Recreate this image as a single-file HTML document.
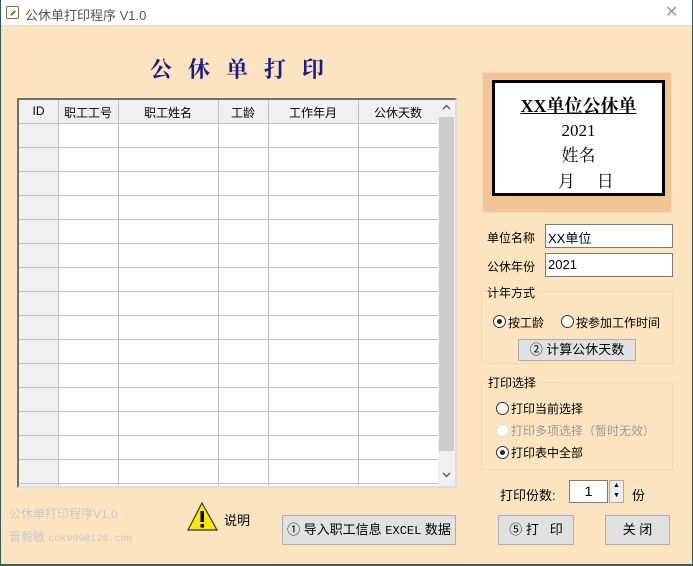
<!DOCTYPE html>
<html><head><meta charset="utf-8"><style>
*{margin:0;padding:0;box-sizing:border-box}
body{width:693px;height:566px;overflow:hidden;background:#fde4c0;font-family:"Liberation Sans","Noto Sans CJK SC",sans-serif;font-size:12px;color:#000;position:relative}
.a{position:absolute}
.t{white-space:nowrap}
.btn{position:absolute;background:#e1e1e1;border:1px solid #adadad;text-align:center;font-size:13px}
.radio{position:absolute;width:13px;height:13px;border:1px solid #333;border-radius:50%;background:#fff}
.radio.on::after{content:"";position:absolute;left:3px;top:3px;width:5px;height:5px;border-radius:50%;background:#222}
</style></head><body>
<div class="a" style="left:0;top:0;width:693px;height:26px;background:#fff;border-bottom:1px solid #f0e0c8"></div>
<div class="a" style="left:6px;top:6px;width:13px;height:13px;border:1px solid #8a6a3a;border-radius:2px;background:#fff"><div style="position:absolute;left:3px;top:5px;width:6px;height:2px;background:#3a9a3a;transform:rotate(-45deg)"></div></div>
<div class="a t" style="left:25px;top:5px;font-size:13px;color:#555">公休单打印程序 V1.0</div>
<div class="a t" style="left:665px;top:2px;font-size:16px;color:#999;font-weight:300">✕</div>
<div class="a" style="left:0;top:0;width:1px;height:566px;background:#2f5a5a"></div>
<div class="a" style="left:692px;top:0;width:1px;height:566px;background:#2f5a5a"></div>
<div class="a" style="left:0;top:564px;width:693px;height:2px;background:#3d5f5a"></div>

<div class="a t" style="left:150px;top:53px;font-size:22px;font-weight:bold;color:#1a1a8a;letter-spacing:16px;font-family:'Noto Serif CJK SC',serif">公休单打印</div>

<!-- grid -->
<div class="a" style="left:17px;top:98px;width:440px;height:390px;border:2px solid #6e6e6e;border-right-color:#ddd;border-bottom-color:#ddd;background:#fff;overflow:hidden">
<svg width="436" height="386" style="position:absolute;left:0;top:0">
<rect x="0" y="0" width="419" height="23" fill="#f0f0f0"/>
<rect x="0" y="0" width="39" height="386" fill="#f0f0f0"/>
<g stroke="#c0c0c0" stroke-width="1">
<line x1="39.5" y1="0" x2="39.5" y2="386"/><line x1="99.5" y1="0" x2="99.5" y2="386"/><line x1="199.5" y1="0" x2="199.5" y2="386"/><line x1="249.5" y1="0" x2="249.5" y2="386"/><line x1="339.5" y1="0" x2="339.5" y2="386"/>
<line x1="0" y1="23.5" x2="419" y2="23.5"/><line x1="0" y1="47.5" x2="419" y2="47.5"/><line x1="0" y1="71.5" x2="419" y2="71.5"/><line x1="0" y1="95.5" x2="419" y2="95.5"/><line x1="0" y1="119.5" x2="419" y2="119.5"/><line x1="0" y1="143.5" x2="419" y2="143.5"/><line x1="0" y1="167.5" x2="419" y2="167.5"/><line x1="0" y1="191.5" x2="419" y2="191.5"/><line x1="0" y1="215.5" x2="419" y2="215.5"/><line x1="0" y1="239.5" x2="419" y2="239.5"/><line x1="0" y1="263.5" x2="419" y2="263.5"/><line x1="0" y1="287.5" x2="419" y2="287.5"/><line x1="0" y1="311.5" x2="419" y2="311.5"/><line x1="0" y1="335.5" x2="419" y2="335.5"/><line x1="0" y1="359.5" x2="419" y2="359.5"/><line x1="0" y1="383.5" x2="419" y2="383.5"/>
</g>
<rect x="419" y="0" width="17" height="386" fill="#f0f0f0"/>
<rect x="420" y="17" width="15" height="334" fill="#cdcdcd"/>
<path d="M424 9 L427.5 5.5 L431 9" fill="none" stroke="#555" stroke-width="1.3"/>
<path d="M424 373 L427.5 376.5 L431 373" fill="none" stroke="#555" stroke-width="1.3"/>
</svg>
<div class="a t" style="left:0;top:4px;width:39px;text-align:center">ID</div>
<div class="a t" style="left:39px;top:4px;width:60px;text-align:center">职工工号</div>
<div class="a t" style="left:99px;top:4px;width:100px;text-align:center">职工姓名</div>
<div class="a t" style="left:199px;top:4px;width:50px;text-align:center">工龄</div>
<div class="a t" style="left:249px;top:4px;width:90px;text-align:center">工作年月</div>
<div class="a t" style="left:339px;top:4px;width:80px;text-align:center">公休天数</div>
</div>

<!-- preview -->
<div class="a" style="left:482px;top:72px;width:190px;height:141px;background:#f3c495;border:1px solid #f8d8b8"></div>
<div class="a" style="left:492px;top:80px;width:173px;height:116px;background:#fff;border:3px solid #000"></div>
<div class="a t" style="left:492px;top:92px;width:173px;text-align:center;font-family:'Liberation Serif','Noto Serif CJK SC',serif;font-size:18px;font-weight:bold;text-decoration:underline">XX单位公休单</div>
<div class="a t" style="left:492px;top:121px;width:173px;text-align:center;font-family:'Liberation Serif','Noto Serif CJK SC',serif;font-size:17px">2021</div>
<div class="a t" style="left:492px;top:141px;width:173px;text-align:center;font-family:'Noto Serif CJK SC',serif;font-size:17px">姓名</div>
<div class="a t" style="left:558px;top:167px;font-family:'Noto Serif CJK SC',serif;font-size:17px">月&nbsp;&nbsp;&nbsp;&nbsp;&nbsp;日</div>

<div class="a t" style="left:487px;top:229px">单位名称</div>
<div class="a" style="left:545px;top:224px;width:128px;height:24px;background:#fff;border:1px solid #7a7a7a"></div>
<div class="a t" style="left:548px;top:228px;font-size:13px">XX单位</div>
<div class="a t" style="left:487px;top:258px">公休年份</div>
<div class="a" style="left:545px;top:253px;width:128px;height:24px;background:#fff;border:1px solid #7a7a7a"></div>
<div class="a t" style="left:548px;top:257px;font-size:13px">2021</div>

<div class="a" style="left:481px;top:291px;width:192px;height:73px;border:1px solid #f0d8b8"></div>
<div class="a t" style="left:487px;top:284px;background:#fde4c0;padding-right:3px">计年方式</div>
<div class="radio on" style="left:493px;top:315px"></div>
<div class="a t" style="left:508px;top:314px">按工龄</div>
<div class="radio" style="left:561px;top:315px"></div>
<div class="a t" style="left:576px;top:314px">按参加工作时间</div>
<div class="btn" style="left:518px;top:339px;width:118px;height:22px;line-height:20px">② 计算公休天数</div>

<div class="a" style="left:481px;top:382px;width:192px;height:88px;border:1px solid #f0d8b8"></div>
<div class="a t" style="left:488px;top:374px;background:#fde4c0;padding-right:3px">打印选择</div>
<div class="radio" style="left:496px;top:402px"></div>
<div class="a t" style="left:511px;top:400px">打印当前选择</div>
<div class="radio" style="left:496px;top:424px;border-color:#ddd"></div>
<div class="a t" style="left:511px;top:422px;color:#999">打印多项选择（暂时无效）</div>
<div class="radio on" style="left:496px;top:446px"></div>
<div class="a t" style="left:511px;top:444px">打印表中全部</div>

<div class="a t" style="left:500px;top:485px;font-size:13px">打印份数:</div>
<div class="a" style="left:569px;top:480px;width:39px;height:23px;background:#fff;border:1px solid #7a7a7a;text-align:center;font-size:14px;line-height:21px">1</div>
<div class="a" style="left:609px;top:480px;width:15px;height:23px;background:#eee;border:1px solid #aaa"><div style="font-size:7px;text-align:center;line-height:10px">▲<br>▼</div></div>
<div class="a t" style="left:632px;top:485px;font-size:13px">份</div>

<div class="btn" style="left:498px;top:515px;width:76px;height:30px;line-height:28px">⑤ 打&nbsp;&nbsp;&nbsp;印</div>
<div class="btn" style="left:605px;top:515px;width:65px;height:30px;line-height:28px">关 闭</div>

<div class="a t" style="left:9px;top:505px;color:#c8c8c8;font-size:12px">公休单打印程序V1.0</div>
<div class="a t" style="left:9px;top:528px;color:#c8c8c8;font-size:12px">晋毅敏 <span style="font-family:'Liberation Mono',monospace;font-size:10px">cok999@126.com</span></div>

<svg class="a" style="left:187px;top:501px" width="34" height="34"><polygon points="15,2 30,29 1,29" fill="#ffe800" stroke="#333" stroke-width="1.2"/><rect x="13.5" y="10" width="3.5" height="11" fill="#000"/><rect x="13.5" y="23" width="3.5" height="3.5" fill="#000"/></svg>
<div class="a t" style="left:224px;top:510px;font-size:13px">说明</div>
<div class="btn" style="left:282px;top:515px;width:174px;height:30px;line-height:28px">① 导入职工信息 <span style="font-family:'Liberation Mono',monospace;font-size:12px">EXCEL</span> 数据</div>
</body></html>
